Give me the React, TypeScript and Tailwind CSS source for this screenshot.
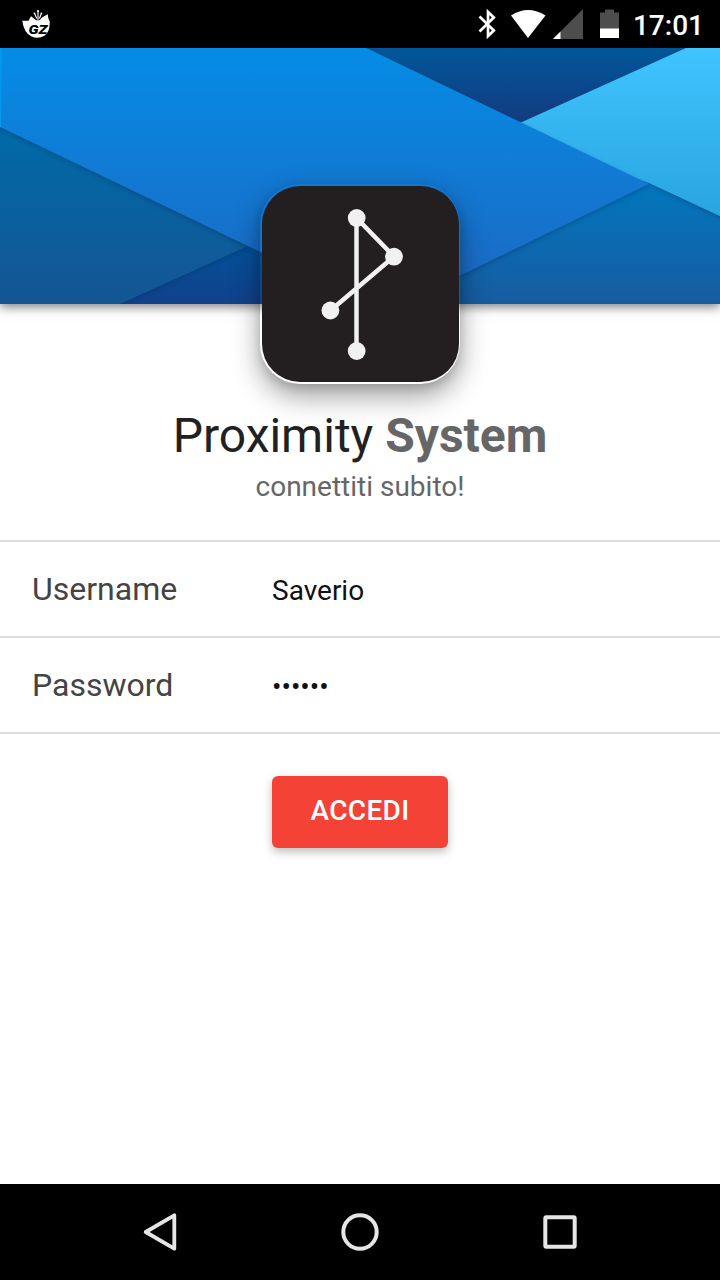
import React, { useState } from "react";

function AppLogo() {
  return (
    <svg className="h-8 w-8" viewBox="20 8 32 32">
      <path
        d="M22.300 20.800L28.600 20.800L31 16.300L36.200 20.300H39.500L42 17.500L47.800 14.200Q48.200 19.500 49.800 21.500Q50 32 44.500 35.800Q38 39.500 31.500 36.500Q27.500 34.500 25.500 31Q23 27 22.300 20.800Z"
        fill="#fff"
      />
      <path
        d="M38 20V11M34.600 13.500L36.800 18.500M41.400 13.500L39.400 18.500"
        stroke="#fff"
        strokeWidth="1.100"
        fill="none"
      />
      <g fill="#fff">
        <circle cx="38" cy="11" r="1.100" />
        <circle cx="34.500" cy="13.300" r="0.900" />
        <circle cx="41.400" cy="13.300" r="0.900" />
      </g>
      <text
        x="28.500"
        y="33.800"
        textLength="19"
        lengthAdjust="spacingAndGlyphs"
        fontFamily="Roboto"
        fontWeight="900"
        fontStyle="italic"
        fontSize="12"
        fill="#000"
      >
        GZ
      </text>
    </svg>
  );
}

function StatusBar() {
  return (
    <div className="flex h-12 items-center justify-between bg-black pr-4 pl-5">
      <AppLogo />
      <div className="flex items-center">
        <svg className="h-12 w-[152px]" viewBox="474 0 152 48">
          <path
            d="M479.500 16.500L493.800 30.500L488 36V12L493.800 17.500L479.500 31.500"
            fill="none"
            stroke="#fff"
            strokeWidth="2.700"
          />
          <path d="M511 15.500 Q528 4.500 545.500 15.500 L528 38Z" fill="#fff" />
          <path d="M583 9 V39 H553Z" fill="#4d4d4d" />
          <path d="M560.500 31.500 V39 H553Z" fill="#fff" />
          <path d="M600 12.500 H605 V9.500 H614 V12.500 H619 V29 H600Z" fill="#4d4d4d" />
          <path d="M600 28.500 H619 V38 H600Z" fill="#fff" />
        </svg>
        <span className="ml-[7px] pt-1 text-[28px] leading-none font-medium text-white">17:01</span>
      </div>
    </div>
  );
}

function HeaderArt() {
  return (
    <svg className="block h-64 w-full" viewBox="0 48 720 256" preserveAspectRatio="none">
      <defs>
        <linearGradient id="main" gradientUnits="userSpaceOnUse" x1="0" y1="48" x2="0" y2="290">
          <stop offset="0" stopColor="#058ce5" />
          <stop offset="1" stopColor="#1c69c4" />
        </linearGradient>
        <linearGradient id="navy" gradientUnits="userSpaceOnUse" x1="0" y1="48" x2="0" y2="122">
          <stop offset="0" stopColor="#01579b" />
          <stop offset="1" stopColor="#143b80" />
        </linearGradient>
        <linearGradient id="cyan" gradientUnits="userSpaceOnUse" x1="0" y1="48" x2="0" y2="216">
          <stop offset="0" stopColor="#40c4ff" />
          <stop offset="1" stopColor="#29a5e0" />
        </linearGradient>
        <linearGradient id="teal" gradientUnits="userSpaceOnUse" x1="0" y1="127" x2="0" y2="304">
          <stop offset="0" stopColor="#006aa8" />
          <stop offset="1" stopColor="#155593" />
        </linearGradient>
        <linearGradient id="steel" gradientUnits="userSpaceOnUse" x1="0" y1="184" x2="0" y2="304">
          <stop offset="0" stopColor="#0277bd" />
          <stop offset="1" stopColor="#175ba0" />
        </linearGradient>
        <linearGradient id="deep" gradientUnits="userSpaceOnUse" x1="0" y1="246" x2="0" y2="304">
          <stop offset="0" stopColor="#02529a" />
          <stop offset="1" stopColor="#12408a" />
        </linearGradient>
        <filter
          id="soft"
          x="-10%"
          y="-10%"
          width="120%"
          height="120%"
          colorInterpolationFilters="sRGB"
        >
          <feDropShadow dx="0" dy="2" stdDeviation="2" floodColor="#002850" floodOpacity="0.3" />
        </filter>
      </defs>
      <path d="M360 48H720V140H360Z" fill="url(#navy)" />
      <path d="M380 160H720V304H380Z" fill="url(#steel)" />
      <path d="M100 230H400V304H100Z" fill="url(#deep)" />
      <path d="M686 48H724V218L649 183L500 132Z" fill="url(#cyan)" filter="url(#soft)" />
      <path d="M-4 115L200 200L248 246L120 304H-4Z" fill="url(#teal)" filter="url(#soft)" />
      <path d="M-4 44H358L649 184L385 312L-4 125Z" fill="url(#main)" filter="url(#soft)" />
      <path d="M0 48H2L1 127H0Z" fill="#0498ee" />
    </svg>
  );
}

function BrandIcon() {
  return (
    <div className="absolute top-[136px] left-[260px] h-[200px] w-[200px] rounded-[40px] pt-[2px] pl-[2px] shadow-[0_12px_28px_rgba(0,0,0,0.38),0_4px_10px_rgba(0,0,0,0.12)]">
      <div className="h-[195.500px] w-[197px] rounded-[38px] bg-[#231f20]">
        <svg className="block h-full w-full" viewBox="262 186 197 195.500">
          <path
            d="M356.500 351V218L394 256.500L330.500 310.500"
            fill="none"
            stroke="#f1f1f1"
            strokeWidth="4.500"
          />
          <g fill="#f1f1f1">
            <circle cx="356.700" cy="218" r="8.900" />
            <circle cx="394" cy="256.700" r="8.900" />
            <circle cx="330.400" cy="310.500" r="8.900" />
            <circle cx="356.700" cy="351" r="8.900" />
          </g>
        </svg>
      </div>
    </div>
  );
}

function Field({
  label,
  type,
  value,
  onChange,
}: {
  label: string;
  type: string;
  value: string;
  onChange: (value: string) => void;
}) {
  return (
    <label className="flex h-24 items-center border-b-2 border-[#dddddd] pl-8">
      <span className="w-60 text-[32px] leading-[38px] text-[#444444]">{label}</span>
      <input
        className="h-12 min-w-0 flex-1 bg-transparent pt-[2px] text-[28px] text-[#111111] outline-none"
        type={type}
        value={value}
        onChange={(e) => onChange(e.target.value)}
      />
    </label>
  );
}

function NavBar() {
  return (
    <nav className="flex h-24 items-center justify-between bg-black px-[136px]">
      <svg className="h-12 w-12" viewBox="136 1208 48 48" fill="none" stroke="#e6e6e6">
        <path d="M174.300 1215.300V1248.700L145.700 1232Z" strokeWidth="3.800" strokeLinejoin="round" />
      </svg>
      <svg className="h-12 w-12" viewBox="0 0 48 48" fill="none" stroke="#e6e6e6">
        <circle cx="24" cy="24" r="16.700" strokeWidth="4" />
      </svg>
      <svg className="h-12 w-12" viewBox="0 0 48 48" fill="none" stroke="#e6e6e6">
        <rect x="9.300" y="9.300" width="29.400" height="29.400" rx="1" strokeWidth="4" />
      </svg>
    </nav>
  );
}

export default function App() {
  const [username, setUsername] = useState("Saverio");
  const [password, setPassword] = useState("segret");

  return (
    <div className="flex h-[1280px] w-[720px] flex-col overflow-hidden bg-white font-['Roboto',sans-serif]">
      <StatusBar />
      <main className="flex flex-1 flex-col">
        <header className="relative h-64 shadow-[0_3px_10px_rgba(0,0,0,0.5)]">
          <HeaderArt />
          <BrandIcon />
        </header>
        <div className="flex flex-col items-center pt-[104px] text-center">
          <h1 className="text-[48px] leading-[56px] text-[#212121]">
            Proximity <strong className="font-bold text-[#666666]">System</strong>
          </h1>
          <p className="mt-[6px] text-[28px] leading-[33px] text-[#666666]">connettiti subito!</p>
        </div>
        <form className="mt-[37px] flex flex-col border-t-2 border-[#dddddd]">
          <Field label="Username" type="text" value={username} onChange={setUsername} />
          <Field label="Password" type="password" value={password} onChange={setPassword} />
          <button
            type="button"
            className="mt-[42px] h-[72px] w-44 self-center rounded-md bg-[#f44336] pb-[2px] text-[28px] font-medium tracking-[0.3px] text-white shadow-[0_4px_10px_rgba(0,0,0,0.26)]"
          >
            ACCEDI
          </button>
        </form>
      </main>
      <NavBar />
    </div>
  );
}
